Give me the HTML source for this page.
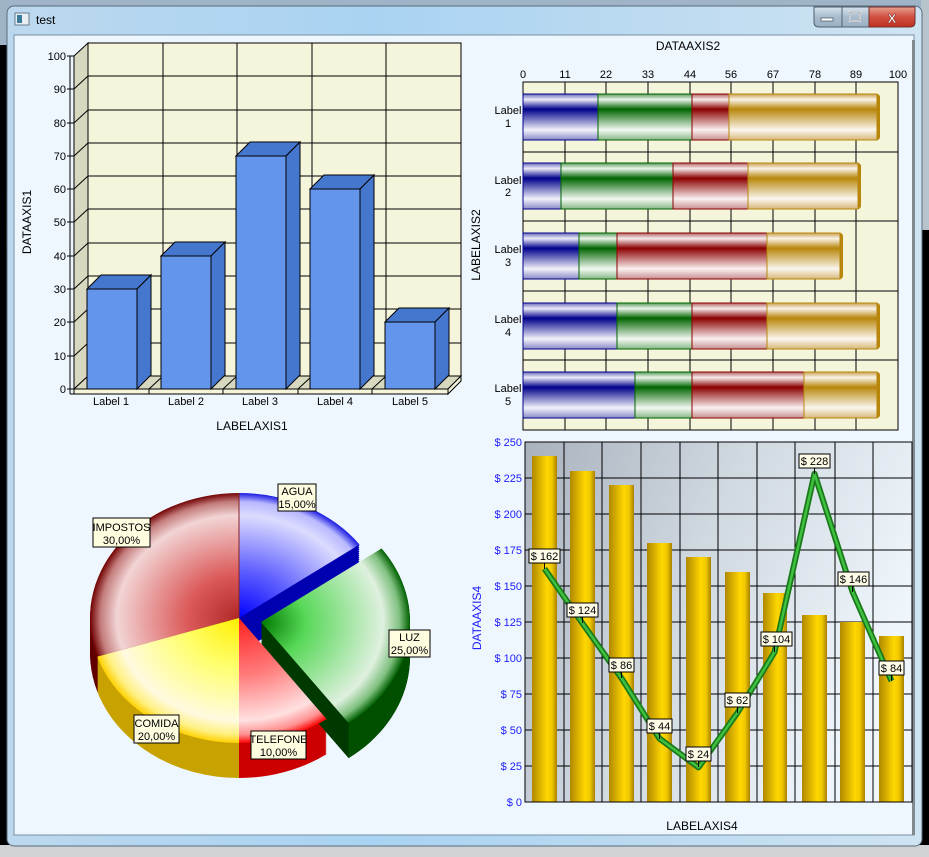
<!DOCTYPE html>
<html><head><meta charset="utf-8"><style>
html,body{margin:0;padding:0;width:929px;height:857px;overflow:hidden;background:#000;}
svg{display:block;font-family:"Liberation Sans",sans-serif;}
</style></head><body>
<svg width="929" height="857" viewBox="0 0 929 857" xmlns="http://www.w3.org/2000/svg">
<defs>
<linearGradient id="title" x1="0" y1="0" x2="1" y2="0">
<stop offset="0" stop-color="#bcd8ee"/><stop offset="0.4" stop-color="#a9d3f2"/><stop offset="0.7" stop-color="#bcdaf0"/><stop offset="1" stop-color="#cfe4f3"/></linearGradient>
<linearGradient id="closeg" x1="0" y1="0" x2="0" y2="1"><stop offset="0" stop-color="#e8a090"/><stop offset="0.5" stop-color="#d05040"/><stop offset="1" stop-color="#c03020"/></linearGradient>
<linearGradient id="btng" x1="0" y1="0" x2="0" y2="1"><stop offset="0" stop-color="#d8e4ee"/><stop offset="0.5" stop-color="#a8bccc"/><stop offset="1" stop-color="#9ab0c4"/></linearGradient>
<linearGradient id="hb" x1="0" y1="0" x2="0" y2="1"><stop offset="0" stop-color="#6a6ab8"/><stop offset="0.12" stop-color="#ececfa"/><stop offset="0.33" stop-color="#00008b"/><stop offset="0.78" stop-color="#f2f2fa"/><stop offset="1" stop-color="#8a8ac8"/></linearGradient>
<linearGradient id="hg" x1="0" y1="0" x2="0" y2="1"><stop offset="0" stop-color="#5a9a5a"/><stop offset="0.12" stop-color="#ecf6ec"/><stop offset="0.33" stop-color="#006400"/><stop offset="0.78" stop-color="#f2f8f2"/><stop offset="1" stop-color="#88b888"/></linearGradient>
<linearGradient id="hr" x1="0" y1="0" x2="0" y2="1"><stop offset="0" stop-color="#b06060"/><stop offset="0.12" stop-color="#f8ecec"/><stop offset="0.33" stop-color="#8b0000"/><stop offset="0.78" stop-color="#faf0f0"/><stop offset="1" stop-color="#c89090"/></linearGradient>
<linearGradient id="ho" x1="0" y1="0" x2="0" y2="1"><stop offset="0" stop-color="#c8a050"/><stop offset="0.12" stop-color="#faf4e8"/><stop offset="0.33" stop-color="#b8860b"/><stop offset="0.78" stop-color="#faf6ee"/><stop offset="1" stop-color="#d8b878"/></linearGradient>
<linearGradient id="plotbg" x1="0" y1="0" x2="1" y2="0.4"><stop offset="0" stop-color="#a9b1bd"/><stop offset="0.5" stop-color="#d0d8e0"/><stop offset="1" stop-color="#eef5fb"/></linearGradient>
<linearGradient id="gold" x1="0" y1="0" x2="1" y2="0"><stop offset="0" stop-color="#b08800"/><stop offset="0.6" stop-color="#ffd700"/><stop offset="0.8" stop-color="#f0c800"/><stop offset="1" stop-color="#a88000"/></linearGradient>
<radialGradient id="pImp" gradientUnits="userSpaceOnUse" cx="239" cy="618" r="149" gradientTransform="translate(239 618) scale(1 0.84) translate(-239 -618)"><stop offset="0" stop-color="#b02828"/><stop offset="0.35" stop-color="#dc5a5a"/><stop offset="0.82" stop-color="#f2d4d4"/><stop offset="0.93" stop-color="#c47c7c"/><stop offset="1" stop-color="#700000"/></radialGradient>
<radialGradient id="pAg" gradientUnits="userSpaceOnUse" cx="239" cy="618" r="149" gradientTransform="translate(239 618) scale(1 0.84) translate(-239 -618)"><stop offset="0" stop-color="#0000ff"/><stop offset="0.4" stop-color="#6464ff"/><stop offset="0.82" stop-color="#dcdcff"/><stop offset="0.93" stop-color="#b8b8ff"/><stop offset="1" stop-color="#1818e0"/></radialGradient>
<radialGradient id="pCo" gradientUnits="userSpaceOnUse" cx="239" cy="618" r="149" gradientTransform="translate(239 618) scale(1 0.84) translate(-239 -618)"><stop offset="0" stop-color="#ffee00"/><stop offset="0.4" stop-color="#ffff70"/><stop offset="0.82" stop-color="#fffae0"/><stop offset="0.93" stop-color="#fff080"/><stop offset="1" stop-color="#ffd000"/></radialGradient>
<radialGradient id="pTe" gradientUnits="userSpaceOnUse" cx="239" cy="618" r="149" gradientTransform="translate(239 618) scale(1 0.84) translate(-239 -618)"><stop offset="0" stop-color="#ff2020"/><stop offset="0.45" stop-color="#ff7a7a"/><stop offset="0.82" stop-color="#ffe0e0"/><stop offset="0.93" stop-color="#ff9090"/><stop offset="1" stop-color="#ff0000"/></radialGradient>
<radialGradient id="pLu" gradientUnits="userSpaceOnUse" cx="261" cy="622" r="149" gradientTransform="translate(261 622) scale(1 0.84) translate(-261 -622)"><stop offset="0" stop-color="#007a00"/><stop offset="0.3" stop-color="#58d858"/><stop offset="0.82" stop-color="#dff0df"/><stop offset="0.93" stop-color="#80c080"/><stop offset="1" stop-color="#006000"/></radialGradient>
<path id="sImp" d="M239,618 L97.3,656.6 A149,125 0 0 1 239,493 Z"/>
<path id="sAg" d="M239,618 L239,493 A149,125 0 0 1 359.5,544.5 Z"/>
<path id="sCo" d="M239,618 L239,743 A149,125 0 0 1 97.3,656.6 Z"/>
<path id="sTe" d="M239,618 L326.6,719.1 A149,125 0 0 1 239,743 Z"/>
<path id="sLu" d="M261,622 L381.5,548.5 A149,125 0 0 1 348.6,723.1 Z"/>
<g id="xImp"><use href="#sImp" y="35"/><use href="#sImp" y="33"/><use href="#sImp" y="31"/><use href="#sImp" y="29"/><use href="#sImp" y="27"/><use href="#sImp" y="25"/><use href="#sImp" y="23"/><use href="#sImp" y="21"/><use href="#sImp" y="19"/><use href="#sImp" y="17"/><use href="#sImp" y="15"/><use href="#sImp" y="13"/><use href="#sImp" y="11"/><use href="#sImp" y="9"/><use href="#sImp" y="7"/><use href="#sImp" y="5"/><use href="#sImp" y="3"/><use href="#sImp" y="1"/></g>
<g id="xAg"><use href="#sAg" y="35"/><use href="#sAg" y="33"/><use href="#sAg" y="31"/><use href="#sAg" y="29"/><use href="#sAg" y="27"/><use href="#sAg" y="25"/><use href="#sAg" y="23"/><use href="#sAg" y="21"/><use href="#sAg" y="19"/><use href="#sAg" y="17"/><use href="#sAg" y="15"/><use href="#sAg" y="13"/><use href="#sAg" y="11"/><use href="#sAg" y="9"/><use href="#sAg" y="7"/><use href="#sAg" y="5"/><use href="#sAg" y="3"/><use href="#sAg" y="1"/></g>
<g id="xCo"><use href="#sCo" y="35"/><use href="#sCo" y="33"/><use href="#sCo" y="31"/><use href="#sCo" y="29"/><use href="#sCo" y="27"/><use href="#sCo" y="25"/><use href="#sCo" y="23"/><use href="#sCo" y="21"/><use href="#sCo" y="19"/><use href="#sCo" y="17"/><use href="#sCo" y="15"/><use href="#sCo" y="13"/><use href="#sCo" y="11"/><use href="#sCo" y="9"/><use href="#sCo" y="7"/><use href="#sCo" y="5"/><use href="#sCo" y="3"/><use href="#sCo" y="1"/></g>
<g id="xTe"><use href="#sTe" y="35"/><use href="#sTe" y="33"/><use href="#sTe" y="31"/><use href="#sTe" y="29"/><use href="#sTe" y="27"/><use href="#sTe" y="25"/><use href="#sTe" y="23"/><use href="#sTe" y="21"/><use href="#sTe" y="19"/><use href="#sTe" y="17"/><use href="#sTe" y="15"/><use href="#sTe" y="13"/><use href="#sTe" y="11"/><use href="#sTe" y="9"/><use href="#sTe" y="7"/><use href="#sTe" y="5"/><use href="#sTe" y="3"/><use href="#sTe" y="1"/></g>
<g id="xLu"><use href="#sLu" y="35"/><use href="#sLu" y="33"/><use href="#sLu" y="31"/><use href="#sLu" y="29"/><use href="#sLu" y="27"/><use href="#sLu" y="25"/><use href="#sLu" y="23"/><use href="#sLu" y="21"/><use href="#sLu" y="19"/><use href="#sLu" y="17"/><use href="#sLu" y="15"/><use href="#sLu" y="13"/><use href="#sLu" y="11"/><use href="#sLu" y="9"/><use href="#sLu" y="7"/><use href="#sLu" y="5"/><use href="#sLu" y="3"/><use href="#sLu" y="1"/></g>
</defs>

<rect x="0" y="0" width="929" height="857" fill="#000"/>
<rect x="0" y="0" width="929" height="45" fill="#9fb4c6"/>
<rect x="921" y="0" width="8" height="230" fill="#b8c4cc"/>
<rect x="0" y="845" width="929" height="12" fill="#cfd3d6"/>

<rect x="7" y="6" width="915" height="840" rx="7" fill="url(#title)" stroke="#5a6c7c"/>
<rect x="14" y="35" width="900" height="800" fill="#eef6fe" stroke="#7890a4"/>
<rect x="912" y="40" width="3" height="795" fill="#808890"/>
<rect x="15" y="13" width="14" height="12" fill="#e8eef4" stroke="#6a7c8c"/>
<rect x="17" y="15" width="5" height="8" fill="#3a7a9a"/>
<text x="36" y="24" font-size="12" fill="#000">test</text>
<path d="M814,7 H869 V27 H819 Q814,27 814,22 Z" fill="url(#btng)" stroke="#506070"/>
<line x1="842" y1="7" x2="842" y2="27" stroke="#506070"/>
<rect x="821" y="18" width="12" height="3" fill="#fff" stroke="#405060" stroke-width="0.7"/>
<rect x="850" y="12" width="10" height="9" fill="none" stroke="#fff" stroke-width="2"/>
<rect x="850" y="12" width="10" height="9" fill="none" stroke="#405060" stroke-width="0.6"/>
<path d="M869,7 H915 V22 Q915,27 910,27 H869 Z" fill="url(#closeg)" stroke="#703030"/>
<text x="892" y="23" font-size="13" font-weight="bold" fill="#fff" text-anchor="middle" stroke="#702020" stroke-width="0.5">X</text>

<!-- Chart 1 -->
<rect x="88" y="43" width="373" height="333" fill="#f5f5dc" stroke="#000"/>
<g stroke="#000" stroke-width="1">
<line x1="88" y1="76" x2="461" y2="76"/><line x1="88" y1="110" x2="461" y2="110"/><line x1="88" y1="143" x2="461" y2="143"/><line x1="88" y1="176" x2="461" y2="176"/><line x1="88" y1="209" x2="461" y2="209"/><line x1="88" y1="243" x2="461" y2="243"/><line x1="88" y1="276" x2="461" y2="276"/><line x1="88" y1="309" x2="461" y2="309"/><line x1="88" y1="343" x2="461" y2="343"/>
<line x1="163" y1="43" x2="163" y2="376"/><line x1="237" y1="43" x2="237" y2="376"/><line x1="312" y1="43" x2="312" y2="376"/><line x1="386" y1="43" x2="386" y2="376"/>
</g>
<polygon points="74,56 88,43 88,376 74,389" fill="#d8d8c0" stroke="#000"/>
<g stroke="#000"><line x1="74" y1="89" x2="88" y2="76"/><line x1="74" y1="123" x2="88" y2="110"/><line x1="74" y1="156" x2="88" y2="143"/><line x1="74" y1="189" x2="88" y2="176"/><line x1="74" y1="222" x2="88" y2="209"/><line x1="74" y1="256" x2="88" y2="243"/><line x1="74" y1="289" x2="88" y2="276"/><line x1="74" y1="322" x2="88" y2="309"/><line x1="74" y1="356" x2="88" y2="343"/></g>
<polygon points="74,389 88,376 461,376 448,389" fill="#d8d8c0" stroke="#000"/>
<g stroke="#000"><line x1="149" y1="389" x2="163" y2="376"/><line x1="223" y1="389" x2="237" y2="376"/><line x1="298" y1="389" x2="312" y2="376"/><line x1="372" y1="389" x2="386" y2="376"/></g>
<polygon points="448,389 461,376 461,381 448,394" fill="#f5f5dc" stroke="#000"/>
<rect x="74" y="389" width="374" height="5" fill="#f5f5dc" stroke="#000"/>
<g stroke="#000"><line x1="149" y1="389" x2="149" y2="394"/><line x1="223" y1="389" x2="223" y2="394"/><line x1="298" y1="389" x2="298" y2="394"/><line x1="372" y1="389" x2="372" y2="394"/></g>
<line x1="70" y1="56" x2="70" y2="394" stroke="#000"/>
<line x1="70" y1="394" x2="74" y2="394" stroke="#000"/>
<g stroke="#000"><line x1="67" y1="56" x2="74" y2="56"/><line x1="67" y1="89" x2="74" y2="89"/><line x1="67" y1="123" x2="74" y2="123"/><line x1="67" y1="156" x2="74" y2="156"/><line x1="67" y1="189" x2="74" y2="189"/><line x1="67" y1="222" x2="74" y2="222"/><line x1="67" y1="256" x2="74" y2="256"/><line x1="67" y1="289" x2="74" y2="289"/><line x1="67" y1="322" x2="74" y2="322"/><line x1="67" y1="356" x2="74" y2="356"/><line x1="67" y1="389" x2="74" y2="389"/></g>
<g font-size="11" fill="#000" text-anchor="end">
<text x="66" y="60">100</text><text x="66" y="93">90</text><text x="66" y="127">80</text><text x="66" y="160">70</text><text x="66" y="193">60</text><text x="66" y="226">50</text><text x="66" y="260">40</text><text x="66" y="293">30</text><text x="66" y="326">20</text><text x="66" y="360">10</text><text x="66" y="393">0</text>
</g>
<g stroke="#000" stroke-width="1">
<polygon points="87,289 101,275 151,275 137,289" fill="#4677cf"/><polygon points="137,289 151,275 151,375 137,389" fill="#4677cf"/><rect x="87" y="289" width="50" height="100" fill="#6495ed"/>
<polygon points="161,256 175,242 225,242 211,256" fill="#4677cf"/><polygon points="211,256 225,242 225,375 211,389" fill="#4677cf"/><rect x="161" y="256" width="50" height="133" fill="#6495ed"/>
<polygon points="236,156 250,142 300,142 286,156" fill="#4677cf"/><polygon points="286,156 300,142 300,375 286,389" fill="#4677cf"/><rect x="236" y="156" width="50" height="233" fill="#6495ed"/>
<polygon points="310,189 324,175 374,175 360,189" fill="#4677cf"/><polygon points="360,189 374,175 374,375 360,389" fill="#4677cf"/><rect x="310" y="189" width="50" height="200" fill="#6495ed"/>
<polygon points="385,322 399,308 449,308 435,322" fill="#4677cf"/><polygon points="435,322 449,308 449,375 435,389" fill="#4677cf"/><rect x="385" y="322" width="50" height="67" fill="#6495ed"/>
</g>
<g font-size="11" fill="#000" text-anchor="middle">
<text x="111" y="405">Label 1</text><text x="186" y="405">Label 2</text><text x="260" y="405">Label 3</text><text x="335" y="405">Label 4</text><text x="410" y="405">Label 5</text>
</g>
<text x="252" y="430" font-size="12" text-anchor="middle" fill="#000">LABELAXIS1</text>
<text transform="translate(31 222) rotate(-90)" font-size="12" text-anchor="middle" fill="#000">DATAAXIS1</text>

<!-- Chart 2 -->
<text x="688" y="50" font-size="12" text-anchor="middle" fill="#000">DATAAXIS2</text>
<g font-size="11" fill="#000" text-anchor="middle">
<text x="523" y="78">0</text><text x="565" y="78">11</text><text x="606" y="78">22</text><text x="648" y="78">33</text><text x="690" y="78">44</text><text x="731" y="78">56</text><text x="773" y="78">67</text><text x="815" y="78">78</text><text x="856" y="78">89</text><text x="898" y="78">100</text>
</g>
<rect x="523" y="82" width="375" height="348" fill="#f5f5dc" stroke="#000"/>
<g stroke="#000"><line x1="565" y1="82" x2="565" y2="430"/><line x1="606" y1="82" x2="606" y2="430"/><line x1="648" y1="82" x2="648" y2="430"/><line x1="690" y1="82" x2="690" y2="430"/><line x1="731" y1="82" x2="731" y2="430"/><line x1="773" y1="82" x2="773" y2="430"/><line x1="815" y1="82" x2="815" y2="430"/><line x1="856" y1="82" x2="856" y2="430"/>
<line x1="523" y1="152" x2="898" y2="152"/><line x1="523" y1="221" x2="898" y2="221"/><line x1="523" y1="291" x2="898" y2="291"/><line x1="523" y1="360" x2="898" y2="360"/></g>
<g stroke-width="1">
<rect x="874" y="94" width="6" height="46" rx="3" fill="#b8860b"/>
<rect x="523" y="94" width="75" height="46" fill="url(#hb)" stroke="#00008b"/><rect x="598" y="94" width="94" height="46" fill="url(#hg)" stroke="#006400"/><rect x="692" y="94" width="37" height="46" fill="url(#hr)" stroke="#8b0000"/><rect x="729" y="94" width="148" height="46" fill="url(#ho)" stroke="#b8860b"/>
<rect x="855" y="163" width="6" height="46" rx="3" fill="#b8860b"/>
<rect x="523" y="163" width="38" height="46" fill="url(#hb)" stroke="#00008b"/><rect x="561" y="163" width="112" height="46" fill="url(#hg)" stroke="#006400"/><rect x="673" y="163" width="75" height="46" fill="url(#hr)" stroke="#8b0000"/><rect x="748" y="163" width="110" height="46" fill="url(#ho)" stroke="#b8860b"/>
<rect x="837" y="233" width="6" height="46" rx="3" fill="#b8860b"/>
<rect x="523" y="233" width="56" height="46" fill="url(#hb)" stroke="#00008b"/><rect x="579" y="233" width="38" height="46" fill="url(#hg)" stroke="#006400"/><rect x="617" y="233" width="150" height="46" fill="url(#hr)" stroke="#8b0000"/><rect x="767" y="233" width="73" height="46" fill="url(#ho)" stroke="#b8860b"/>
<rect x="874" y="303" width="6" height="46" rx="3" fill="#b8860b"/>
<rect x="523" y="303" width="94" height="46" fill="url(#hb)" stroke="#00008b"/><rect x="617" y="303" width="75" height="46" fill="url(#hg)" stroke="#006400"/><rect x="692" y="303" width="75" height="46" fill="url(#hr)" stroke="#8b0000"/><rect x="767" y="303" width="110" height="46" fill="url(#ho)" stroke="#b8860b"/>
<rect x="874" y="372" width="6" height="46" rx="3" fill="#b8860b"/>
<rect x="523" y="372" width="112" height="46" fill="url(#hb)" stroke="#00008b"/><rect x="635" y="372" width="57" height="46" fill="url(#hg)" stroke="#006400"/><rect x="692" y="372" width="112" height="46" fill="url(#hr)" stroke="#8b0000"/><rect x="804" y="372" width="73" height="46" fill="url(#ho)" stroke="#b8860b"/>
</g>
<g font-size="11" fill="#000" text-anchor="middle">
<text x="508" y="114">Label</text><text x="508" y="127">1</text>
<text x="508" y="184">Label</text><text x="508" y="196">2</text>
<text x="508" y="253">Label</text><text x="508" y="266">3</text>
<text x="508" y="323">Label</text><text x="508" y="336">4</text>
<text x="508" y="392">Label</text><text x="508" y="405">5</text>
</g>
<text transform="translate(480 245) rotate(-90)" font-size="12" text-anchor="middle" fill="#000">LABELAXIS2</text>

<!-- Chart 4 -->
<rect x="525" y="442" width="387" height="360" fill="url(#plotbg)"/>
<g stroke="#000"><line x1="525" y1="478" x2="912" y2="478"/><line x1="525" y1="514" x2="912" y2="514"/><line x1="525" y1="550" x2="912" y2="550"/><line x1="525" y1="586" x2="912" y2="586"/><line x1="525" y1="622" x2="912" y2="622"/><line x1="525" y1="658" x2="912" y2="658"/><line x1="525" y1="694" x2="912" y2="694"/><line x1="525" y1="730" x2="912" y2="730"/><line x1="525" y1="766" x2="912" y2="766"/>
<line x1="564" y1="442" x2="564" y2="802"/><line x1="602" y1="442" x2="602" y2="802"/><line x1="641" y1="442" x2="641" y2="802"/><line x1="680" y1="442" x2="680" y2="802"/><line x1="718" y1="442" x2="718" y2="802"/><line x1="757" y1="442" x2="757" y2="802"/><line x1="795" y1="442" x2="795" y2="802"/><line x1="835" y1="442" x2="835" y2="802"/><line x1="873" y1="442" x2="873" y2="802"/></g>
<g fill="url(#gold)">
<rect x="532" y="456" width="25" height="346"/><rect x="570" y="471" width="25" height="331"/><rect x="609" y="485" width="25" height="317"/><rect x="647" y="543" width="25" height="259"/><rect x="686" y="557" width="25" height="245"/><rect x="725" y="572" width="25" height="230"/><rect x="763" y="593" width="24" height="209"/><rect x="802" y="615" width="25" height="187"/><rect x="840" y="622" width="25" height="180"/><rect x="879" y="636" width="25" height="166"/>
</g>
<rect x="525" y="442" width="387" height="360" fill="none" stroke="#000"/>
<polyline points="544.5,568.7 582.5,623.4 621.5,678.2 659.5,738.6 698.5,767.4 737.5,712.7 774.5,652.2 814.5,473.7 852.5,591.8 891.5,681" fill="none" stroke="#1a7a1a" stroke-width="6" stroke-linejoin="round"/>
<polyline points="544.5,568.7 582.5,623.4 621.5,678.2 659.5,738.6 698.5,767.4 737.5,712.7 774.5,652.2 814.5,473.7 852.5,591.8 891.5,681" fill="none" stroke="#40c040" stroke-width="2.5" stroke-linejoin="round"/>
<g stroke="#000" fill="#fffde8" stroke-width="1">
<line x1="544.5" y1="563" x2="544.5" y2="569"/><rect x="529" y="549" width="31" height="14"/>
<line x1="582.5" y1="617" x2="582.5" y2="623"/><rect x="567" y="603" width="31" height="14"/>
<line x1="621.5" y1="672" x2="621.5" y2="678"/><rect x="609" y="658" width="25" height="14"/>
<line x1="659.5" y1="733" x2="659.5" y2="739"/><rect x="647" y="719" width="25" height="14"/>
<line x1="698.5" y1="761" x2="698.5" y2="767"/><rect x="686" y="747" width="25" height="14"/>
<line x1="737.5" y1="707" x2="737.5" y2="713"/><rect x="725" y="693" width="25" height="14"/>
<line x1="774.5" y1="646" x2="774.5" y2="652"/><rect x="761" y="632" width="31" height="14"/>
<line x1="814.5" y1="468" x2="814.5" y2="474"/><rect x="799" y="454" width="31" height="14"/>
<line x1="852.5" y1="586" x2="852.5" y2="592"/><rect x="838" y="572" width="31" height="14"/>
<line x1="891.5" y1="675" x2="891.5" y2="681"/><rect x="879" y="661" width="25" height="14"/>
</g>
<g font-size="11" fill="#000" text-anchor="middle">
<text x="544.5" y="560">$ 162</text><text x="582.5" y="614">$ 124</text><text x="621.5" y="669">$ 86</text><text x="659.5" y="730">$ 44</text><text x="698.5" y="758">$ 24</text><text x="737.5" y="704">$ 62</text><text x="776.5" y="643">$ 104</text><text x="814.5" y="465">$ 228</text><text x="853.5" y="583">$ 146</text><text x="891.5" y="672">$ 84</text>
</g>
<g font-size="11" fill="#2020ff" text-anchor="end">
<text x="522" y="446">$ 250</text><text x="522" y="482">$ 225</text><text x="522" y="518">$ 200</text><text x="522" y="554">$ 175</text><text x="522" y="590">$ 150</text><text x="522" y="626">$ 125</text><text x="522" y="662">$ 100</text><text x="522" y="698">$ 75</text><text x="522" y="734">$ 50</text><text x="522" y="770">$ 25</text><text x="522" y="806">$ 0</text>
</g>
<text transform="translate(481 618) rotate(-90)" font-size="12" text-anchor="middle" fill="#2020ff">DATAAXIS4</text>
<text x="702" y="830" font-size="12" text-anchor="middle" fill="#000">LABELAXIS4</text>

<!-- Pie -->
<use href="#xImp" fill="#600000"/>
<use href="#xAg" fill="#0000b0"/>
<use href="#xCo" fill="#c8a200"/>
<use href="#xTe" fill="#cc0000"/>
<use href="#xLu" fill="#003a00"/>
<path d="M381.5,583.5 A149,125 0 0 1 348.6,758.1 L348.6,723.1 A149,125 0 0 0 381.5,548.5 Z" fill="#005000"/>
<use href="#sImp" fill="url(#pImp)"/>
<use href="#sAg" fill="url(#pAg)"/>
<use href="#sCo" fill="url(#pCo)"/>
<use href="#sTe" fill="url(#pTe)"/>
<use href="#sLu" fill="url(#pLu)"/>
<line x1="239" y1="493" x2="239" y2="618" stroke="#8b2020" stroke-width="1"/>
<g stroke="#000" fill="#fffde0">
<rect x="278" y="484" width="38" height="27"/>
<rect x="93" y="518" width="57" height="29"/>
<rect x="389" y="630" width="41" height="27"/>
<rect x="134" y="715" width="45" height="28"/>
<rect x="251" y="731" width="55" height="28"/>
</g>
<g font-size="11" fill="#000" text-anchor="middle">
<text x="297" y="495">AGUA</text><text x="297" y="508">15,00%</text>
<text x="121.5" y="531">IMPOSTOS</text><text x="121.5" y="544">30,00%</text>
<text x="409.5" y="641">LUZ</text><text x="409.5" y="654">25,00%</text>
<text x="156.5" y="727">COMIDA</text><text x="156.5" y="740">20,00%</text>
<text x="278.5" y="743">TELEFONE</text><text x="278.5" y="756">10,00%</text>
</g>
</svg>
</body></html>
